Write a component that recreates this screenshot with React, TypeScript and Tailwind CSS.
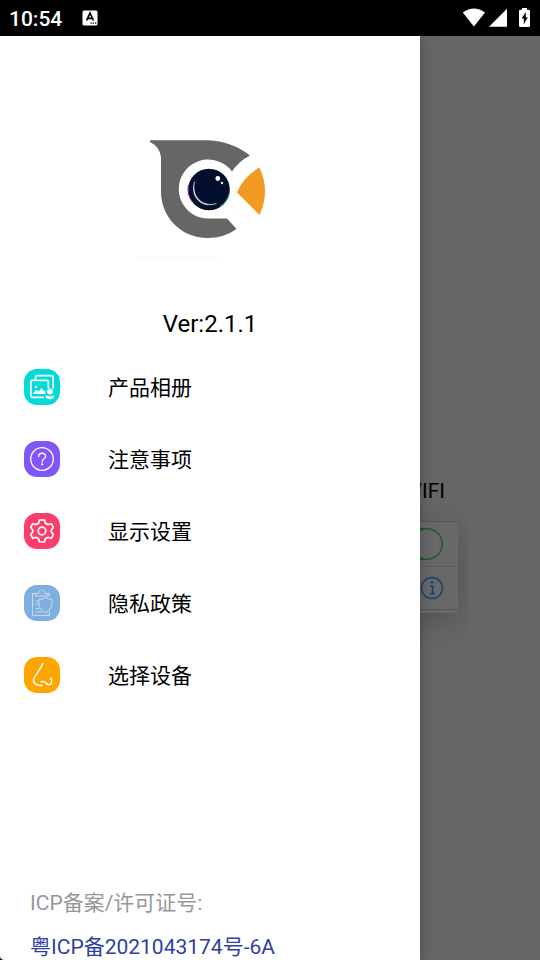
import type { ReactNode } from "react";

type MenuEntry = { label: string; tile: string; icon: ReactNode };

const AlbumIcon = () => (
  <svg viewBox="0 0 36 36" className="size-9" fill="none" stroke="#fff" strokeWidth="1.700" strokeLinejoin="round" strokeLinecap="round" aria-hidden="true">
    <path d="M11.500 10.500V8.500q0-1.800 1.800-1.800h14q1.900 0 1.900 1.900v10.400" />
    <path d="M19.500 28.300H8.500q-1.700 0-1.700-1.700V13q0-1.700 1.700-1.700h14.200q1.700 0 1.700 1.700v5.500" />
    <path d="M9.500 25v-1.500l3-2.500 2 1.500 3-3.500 2.500 3 1.500-.5v3.500z" fill="#fff" stroke="none" />
    <circle cx="12" cy="18" r="1.300" fill="#fff" stroke="none" />
    <circle cx="26" cy="22.500" r="2.900" fill="#fff" stroke="none" />
    <path d="M21.500 26.200q4.500 2 8.800 0 0 4-4.400 4t-4.400-4z" fill="#fff" stroke="none" />
  </svg>
);

const QuestionIcon = () => (
  <svg viewBox="0 0 36 36" className="size-9" fill="none" stroke="#fff" strokeWidth="1.300" strokeLinecap="round" aria-hidden="true">
    <circle cx="18" cy="18" r="11.300" />
    <path d="M14.600 15.500c0-4.300 7-4.300 7-.2 0 2.600-3.500 2.500-3.500 5.700" />
    <circle cx="18.100" cy="23.300" r=".5" fill="#fff" />
  </svg>
);

const GearIcon = () => (
  <svg viewBox="0 0 36 36" className="size-9" fill="none" stroke="#fff" strokeWidth="1.700" strokeLinejoin="round" aria-hidden="true">
    <path d="M15.500 7h5l.9 3.200 2.400 1.400 3.500-.9 2 3.800-2 2.500v2l2 2.500-2 3.800-3.500-.9-2.400 1.400-.9 3.200h-5l-.9-3.200-2.400-1.400-3.500.9-2-3.800 2-2.500v-2l-2-2.500 2-3.800 3.500.9 2.400-1.400z" />
    <circle cx="18" cy="18" r="3.800" />
  </svg>
);

const PolicyIcon = () => (
  <svg viewBox="0 0 36 36" className="size-9" fill="none" stroke="#d3dfe5" strokeWidth=".9" strokeLinejoin="round" aria-hidden="true">
    <path d="M12 8.500H8.500v22h17v-4M21.500 8.500h4V12" />
    <path d="M11.500 11V8.500h3c.5-4.500 6-4.500 6.500 0h3V11z" />
    <path d="M11.500 16h3.500M11.500 19h3M11.500 23.500h4M11.500 27h6" />
    <path d="M21.500 12.500q3 2 6.500 2 1.300 9-6.500 13.500-8-4.500-6.500-13.500 3.500 0 6.500-2z" />
  </svg>
);

const NoseIcon = () => (
  <svg viewBox="0 0 36 36" className="size-9" fill="none" stroke="#fff" strokeWidth="1.500" strokeLinejoin="round" strokeLinecap="round" aria-hidden="true">
    <path d="M18.700 6.500c-2 5.500-5.500 9-8.300 14-2.400 4.500.6 8 7.600 8M17 24.800c4.500-2 4.500 2.700 7.500 3 3.200 0 4.300-3.300 2-6.800" />
  </svg>
);

const entries: MenuEntry[] = [
  { label: "产品相册", tile: "bg-[#00dbda]", icon: <AlbumIcon /> },
  { label: "注意事项", tile: "bg-[#8056fb]", icon: <QuestionIcon /> },
  { label: "显示设置", tile: "bg-[#fb3d6a]", icon: <GearIcon /> },
  { label: "隐私政策", tile: "bg-[#7eafe0]", icon: <PolicyIcon /> },
  { label: "选择设备", tile: "bg-[#ffa500]", icon: <NoseIcon /> },
];

function StatusBar() {
  return (
    <header className="flex h-9 shrink-0 items-center bg-black pr-2 pl-[9px] text-white">
      <time className="pt-0.5 text-[21px] leading-6 font-medium">10:54</time>
      <svg viewBox="0 0 16 16" className="ml-5 size-4" aria-hidden="true">
        <rect x=".5" y=".5" width="15" height="15" rx="1.500" fill="#fff" />
        <path d="M4.600 10.500 8 3l3.400 7.500M5.700 8.300h4.600" fill="none" stroke="#000" strokeWidth="1.700" />
        <path d="M8.500 13.200h1.300M10.700 13.200H12M13 13.200h1.300" stroke="#000" strokeWidth="1.200" />
      </svg>
      <svg viewBox="0 0 70 20" className="ml-auto h-5 w-[70px]" fill="#fff" aria-hidden="true">
        <path d="M.8 4.500Q11.800-3.500 23 4.500L11.900 18.500z" />
        <path d="M45 .8v18H27z" />
        <path d="M60 0h5v1.700h1.700q1.300 0 1.300 1.300v14.700q0 1.300-1.300 1.300h-8.400q-1.300 0-1.300-1.300V3q0-1.300 1.300-1.300H60z" />
        <path d="m63.800 4-4.200 6.500h2.200v6l3.900-7.200h-1.900z" fill="#000" />
      </svg>
    </header>
  );
}

function Logo() {
  return (
    <svg viewBox="0 0 160 150" className="h-[150px] w-40" role="img" aria-label="Logo">
      <path d="M20 20.300H78Q101 21 120 35.500 109 41 102 51.500A29.500 29.500 0 1 0 78 98.500H97L106.500 109Q94 118 78 118C50 118 31 96 31 72V37Q30 27 20 22z" fill="#676566" />
      <path d="M129.500 47.500Q140.500 71 129.500 95L107 72.500Q113 57 129.500 47.500z" fill="#f39a22" />
      <circle cx="79" cy="69.500" r="20.800" fill="#020f2d" />
      <path d="M58.500 65a21 21 0 0 0 4 17" fill="none" stroke="#a00c70" />
      <path d="M99.300 73a21 21 0 0 1-10 14" fill="none" stroke="#19a58e" />
      <path d="M64.500 61.500C59.500 77 72 89 86.500 83.500 73 87 61.500 78 64.500 61.500z" fill="#fff" stroke="#dfe3ee" strokeWidth=".4" />
      <circle cx="87.800" cy="58.500" r="2.400" fill="#fff" />
      <circle cx="92" cy="63" r="1.200" fill="#fff" />
      <path d="M6 138h85" stroke="#f7f7f7" />
      <path d="M106 47h32v48h-32" fill="none" stroke="#fdfaf6" />
    </svg>
  );
}

function WifiGuide() {
  return (
    <section className="mx-auto w-[396px] pt-[443px] text-black">
      <h2 className="pr-[23px] text-right text-[21px] leading-6">WIFI</h2>
      <div className="overflow-hidden px-[10px] pt-[18px] pb-12">
        <div className="h-[92px] border-t border-[#555] bg-[#686868] shadow-[0_8px_30px_rgba(0,0,0,0.2)]">
          <div className="flex h-[45px] items-center justify-end border-b border-[#5b5b5b] pr-[15px]">
            <svg viewBox="0 0 52 32" className="h-8 w-[52px]" aria-hidden="true">
              <rect x="0" y="0" width="52" height="32" rx="16" fill="#21572c" />
              <circle cx="36" cy="16" r="14.500" fill="#686868" />
            </svg>
          </div>
          <div className="flex h-[43px] items-center justify-end border-b border-[#555] pr-[14px]">
            <svg viewBox="0 0 24 24" className="size-6" fill="none" stroke="#16406c" aria-hidden="true">
              <circle cx="12" cy="12" r="10.500" strokeWidth="1.300" />
              <path d="M10 10h2.500v7.500M9.800 17.700h5" strokeWidth="1.600" />
              <circle cx="12" cy="6.500" r="1.300" fill="#16406c" stroke="none" />
            </svg>
          </div>
        </div>
      </div>
    </section>
  );
}

function Drawer() {
  return (
    <aside className="absolute inset-y-0 left-0 flex w-7/9 flex-col bg-white text-black shadow-[0_0_12px_rgba(0,0,0,0.3)]">
      <div className="flex flex-col items-center pt-[84px]">
        <Logo />
        <p className="mt-10 text-2xl leading-7">Ver:2.1.1</p>
      </div>
      <nav className="mt-[13px] flex flex-col">
        {entries.map((entry) => (
          <button key={entry.label} type="button" className="flex h-[72px] items-center gap-12 px-6 text-left text-[21px] leading-6">
            <span className={`size-9 overflow-hidden rounded-[13px] ${entry.tile}`}>{entry.icon}</span>
            <span className="pt-0.5">{entry.label}</span>
          </button>
        ))}
      </nav>
      <footer className="mt-auto flex flex-col gap-[18px] pl-[30px] text-[21px] leading-[26px]">
        <p className="text-[#97979b]">ICP备案/许可证号:</p>
        <a href="#icp" className="self-start text-[#303f9f]">粤ICP备2021043174号-6A</a>
      </footer>
      <svg viewBox="0 0 4 4" className="absolute bottom-0 left-0 size-1" aria-hidden="true">
        <path d="M0 0q0 3.500 4 4H0z" fill="#000" />
      </svg>
    </aside>
  );
}

export default function App() {
  return (
    <div className="flex min-h-screen flex-col bg-[#666] font-['Roboto','Noto_Sans_CJK_SC',sans-serif]">
      <StatusBar />
      <main className="relative flex-1 overflow-hidden">
        <WifiGuide />
        <Drawer />
      </main>
    </div>
  );
}
